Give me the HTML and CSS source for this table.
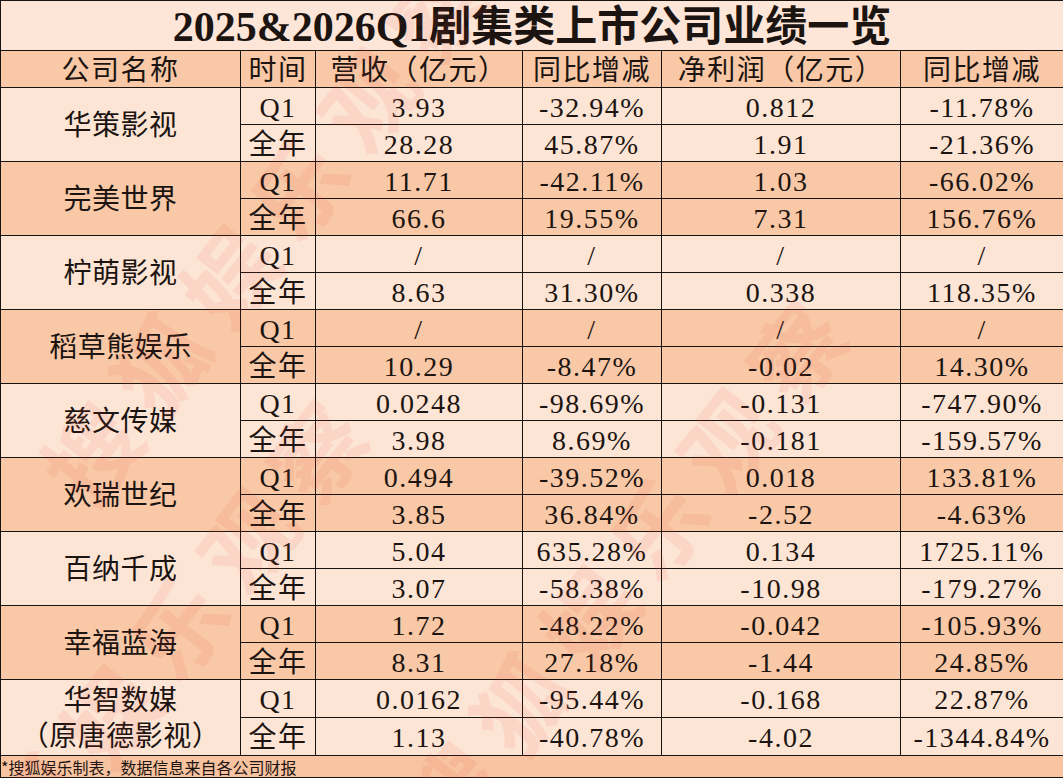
FILE: index.html
```html
<!DOCTYPE html>
<html lang="zh">
<head>
<meta charset="utf-8">
<link rel="stylesheet" href="styles.css">
</head>
<body>
<div class="page">
<table class="sheet">
  <colgroup>
    <col class="c1"><col class="c2"><col class="c3"><col class="c4"><col class="c5"><col class="c6">
  </colgroup>
  <tr class="title"><td colspan="6">2025&amp;2026Q1剧集类上市公司业绩一览</td></tr>
  <tr class="head dark"><td>公司名称</td><td>时间</td><td>营收（亿元）</td><td>同比增减</td><td>净利润（亿元）</td><td>同比增减</td></tr>

  <tr class="light"><td rowspan="2" class="name">华策影视</td><td>Q1</td><td>3.93</td><td>-32.94%</td><td>0.812</td><td>-11.78%</td></tr>
  <tr class="light"><td>全年</td><td>28.28</td><td>45.87%</td><td>1.91</td><td>-21.36%</td></tr>

  <tr class="dark"><td rowspan="2" class="name">完美世界</td><td>Q1</td><td>11.71</td><td>-42.11%</td><td>1.03</td><td>-66.02%</td></tr>
  <tr class="dark"><td>全年</td><td>66.6</td><td>19.55%</td><td>7.31</td><td>156.76%</td></tr>

  <tr class="light"><td rowspan="2" class="name">柠萌影视</td><td>Q1</td><td>/</td><td>/</td><td>/</td><td>/</td></tr>
  <tr class="light"><td>全年</td><td>8.63</td><td>31.30%</td><td>0.338</td><td>118.35%</td></tr>

  <tr class="dark"><td rowspan="2" class="name">稻草熊娱乐</td><td>Q1</td><td>/</td><td>/</td><td>/</td><td>/</td></tr>
  <tr class="dark"><td>全年</td><td>10.29</td><td>-8.47%</td><td>-0.02</td><td>14.30%</td></tr>

  <tr class="light"><td rowspan="2" class="name">慈文传媒</td><td>Q1</td><td>0.0248</td><td>-98.69%</td><td>-0.131</td><td>-747.90%</td></tr>
  <tr class="light"><td>全年</td><td>3.98</td><td>8.69%</td><td>-0.181</td><td>-159.57%</td></tr>

  <tr class="dark"><td rowspan="2" class="name">欢瑞世纪</td><td>Q1</td><td>0.494</td><td>-39.52%</td><td>0.018</td><td>133.81%</td></tr>
  <tr class="dark"><td>全年</td><td>3.85</td><td>36.84%</td><td>-2.52</td><td>-4.63%</td></tr>

  <tr class="light"><td rowspan="2" class="name">百纳千成</td><td>Q1</td><td>5.04</td><td>635.28%</td><td>0.134</td><td>1725.11%</td></tr>
  <tr class="light"><td>全年</td><td>3.07</td><td>-58.38%</td><td>-10.98</td><td>-179.27%</td></tr>

  <tr class="dark"><td rowspan="2" class="name">幸福蓝海</td><td>Q1</td><td>1.72</td><td>-48.22%</td><td>-0.042</td><td>-105.93%</td></tr>
  <tr class="dark"><td>全年</td><td>8.31</td><td>27.18%</td><td>-1.44</td><td>24.85%</td></tr>

  <tr class="light"><td rowspan="2" class="name">华智数媒<br>（原唐德影视）</td><td>Q1</td><td>0.0162</td><td>-95.44%</td><td>-0.168</td><td>22.87%</td></tr>
  <tr class="light"><td>全年</td><td>1.13</td><td>-40.78%</td><td>-4.02</td><td>-1344.84%</td></tr>

  <tr class="foot"><td colspan="6">*搜狐娱乐制表，数据信息来自各公司财报</td></tr>
</table>
<div class="wm wm1">搜狐娱乐观察</div>
<div class="wm wm2">搜狐娱乐观察</div>
<div class="wm wm3">搜狐娱乐观察</div>
</div>
</body>
</html>
```

FILE: styles.css
```css
html, body {
  margin: 0;
  padding: 0;
  background: #fde6d8;
}
.page {
  position: relative;
  width: 1063px;
  height: 778px;
  overflow: hidden;
}
.sheet {
  border-collapse: collapse;
  table-layout: fixed;
  width: 1063px;
  font-family: "Liberation Serif", "Noto Sans CJK SC", serif;
  color: #1c1410;
}
.c1 { width: 240px; }
.c2 { width: 75px; }
.c3 { width: 207px; }
.c4 { width: 139px; }
.c5 { width: 239px; }
.c6 { width: 163px; }
.sheet td {
  border: 1px solid #1a1410;
  text-align: center;
  vertical-align: middle;
  padding: 3px 0 0;
  height: 33px;
  font-size: 28px;
  line-height: 30px;
  white-space: nowrap;
  letter-spacing: 1.5px;
}
.sheet .title td {
  height: 47px;
  font-size: 42px;
  font-weight: bold;
  line-height: 44px;
  background: #fde6d8;
  letter-spacing: 0;
  padding-top: 2px;
}
.light td { background: #fde5d6; }
.dark td { background: #f8c8a7; }
.sheet td.name {
  line-height: 36px;
  letter-spacing: 0.5px;
}
.sheet .foot td {
  height: 21px;
  padding: 0;
  font-size: 16px;
  line-height: 20px;
  text-align: left;
  background: #f8c3a0;
  letter-spacing: 0;
  font-family: "Noto Sans CJK SC", sans-serif;
}
.wm {
  position: absolute;
  font-family: "Noto Sans CJK SC", sans-serif;
  font-weight: bold;
  font-size: 92px;
  color: rgba(235, 70, 50, 0.09);
  transform: rotate(-52deg);
  transform-origin: left center;
  white-space: nowrap;
  pointer-events: none;
  letter-spacing: 20px;
}
.wm1 { left: 60px; top: 420px; }
.wm2 { left: -60px; top: 860px; }
.wm3 { left: 420px; top: 760px; }
```
